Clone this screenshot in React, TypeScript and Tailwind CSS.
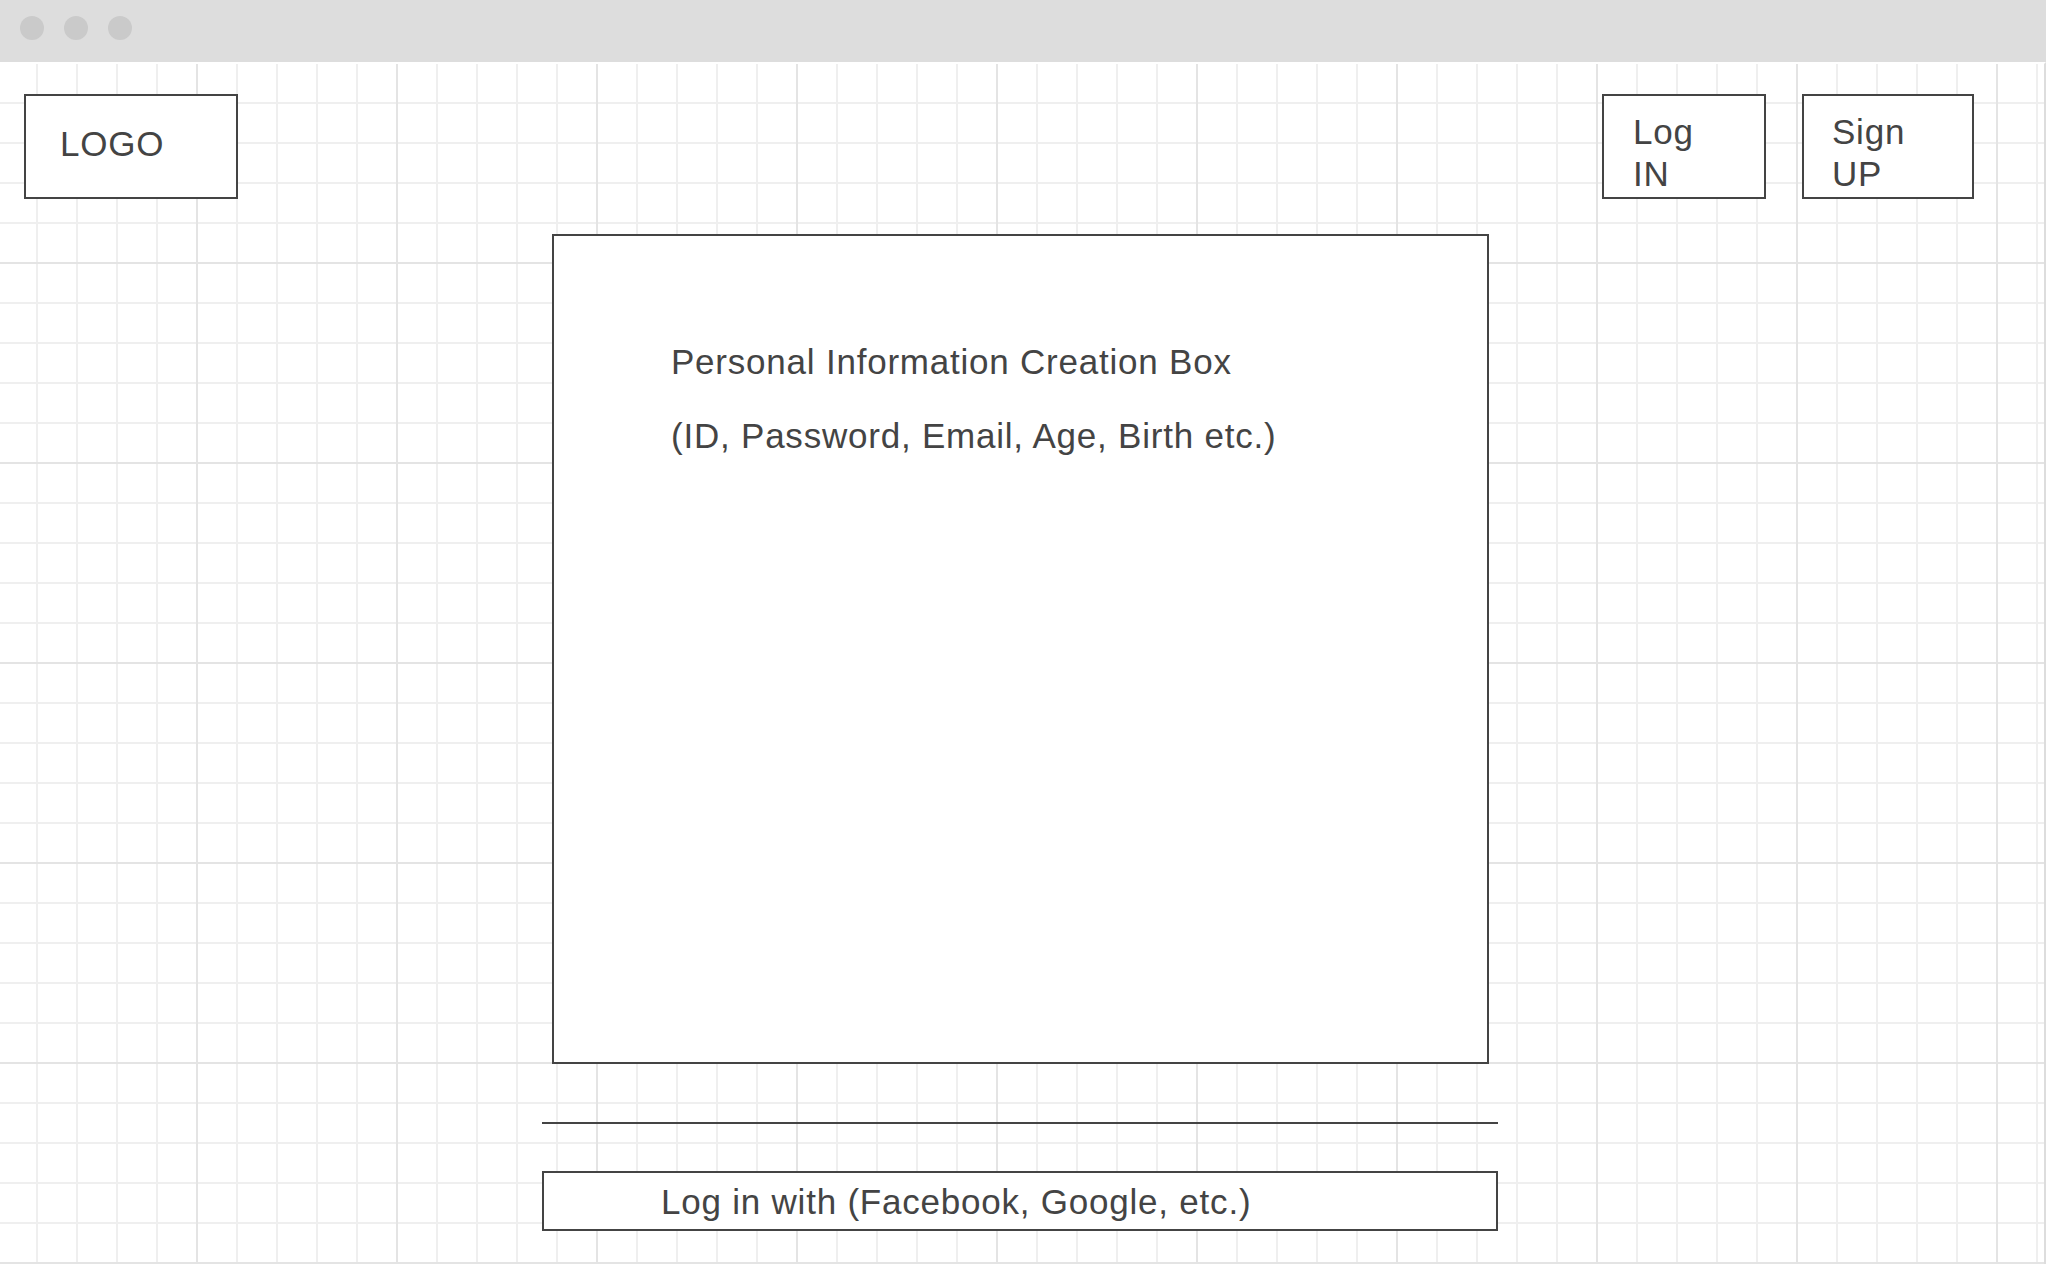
import React from 'react';

// Wireframe: sign-up page sketch on a grid canvas

const boxText = "text-[35px] tracking-[0.78px] text-[#444444]";

const TitleBar: React.FC = () => (
  <div className="h-[62px] bg-[#dddddd] flex items-start pt-[16px] pl-[20px] gap-[20px]">
    <span className="w-[24px] h-[24px] rounded-full bg-[#cacaca]" />
    <span className="w-[24px] h-[24px] rounded-full bg-[#cacaca]" />
    <span className="w-[24px] h-[24px] rounded-full bg-[#cacaca]" />
  </div>
);

const App: React.FC = () => {
  return (
    <div className="w-[2046px] h-[1264px] overflow-hidden bg-white font-['Liberation_Sans',Arial,sans-serif]">
      <TitleBar />

      <div
        className="h-[1202px] border-t-2 border-t-white border-r-2 border-r-[#dddddd] bg-[linear-gradient(to_right,#e4e4e4_2px,transparent_2px),linear-gradient(to_bottom,#e4e4e4_2px,transparent_2px),linear-gradient(to_right,#efefef_2px,transparent_2px),linear-gradient(to_bottom,#efefef_2px,transparent_2px)] bg-[size:200px_200px,200px_200px,40px_40px,40px_40px] bg-[position:-4px_-2px]"
      >
        {/* header */}
        <div className="flex items-start justify-between pt-[30px] pl-[24px] pr-[70px]">
          <div className={`w-[214px] h-[105px] border-2 border-[#444444] bg-white pt-[27px] pl-[34px] leading-[41px] ${boxText}`}>
            LOGO
          </div>
          <div className="flex gap-[36px]">
            <div className={`w-[164px] h-[105px] border-2 border-[#444444] bg-white pt-[15px] pl-[29px] leading-[42px] ${boxText}`}>
              <div>Log</div>
              <div>IN</div>
            </div>
            <div className={`w-[172px] h-[105px] border-2 border-[#444444] bg-white pt-[15px] pl-[28px] leading-[42px] ${boxText}`}>
              <div>Sign</div>
              <div>UP</div>
            </div>
          </div>
        </div>

        {/* personal info box */}
        <div className="pl-[542px]">
          <div className={`ml-[10px] mt-[35px] w-[937px] h-[830px] border-2 border-[#444444] bg-white pt-[105px] pl-[117px] leading-[41px] ${boxText}`}>
            <p>Personal Information Creation Box</p>
            <p className="mt-[33px]">(ID, Password, Email, Age, Birth etc.)</p>
          </div>

          <div className="mt-[58px] w-[956px] h-[2px] bg-[#444444]" />

          <div className={`mt-[47px] w-[956px] h-[60px] border-2 border-[#444444] bg-white flex items-center pl-[117px] leading-[41px] ${boxText}`}>
            Log in with (Facebook, Google, etc.)
          </div>
        </div>
      </div>
    </div>
  );
};

export default App;
